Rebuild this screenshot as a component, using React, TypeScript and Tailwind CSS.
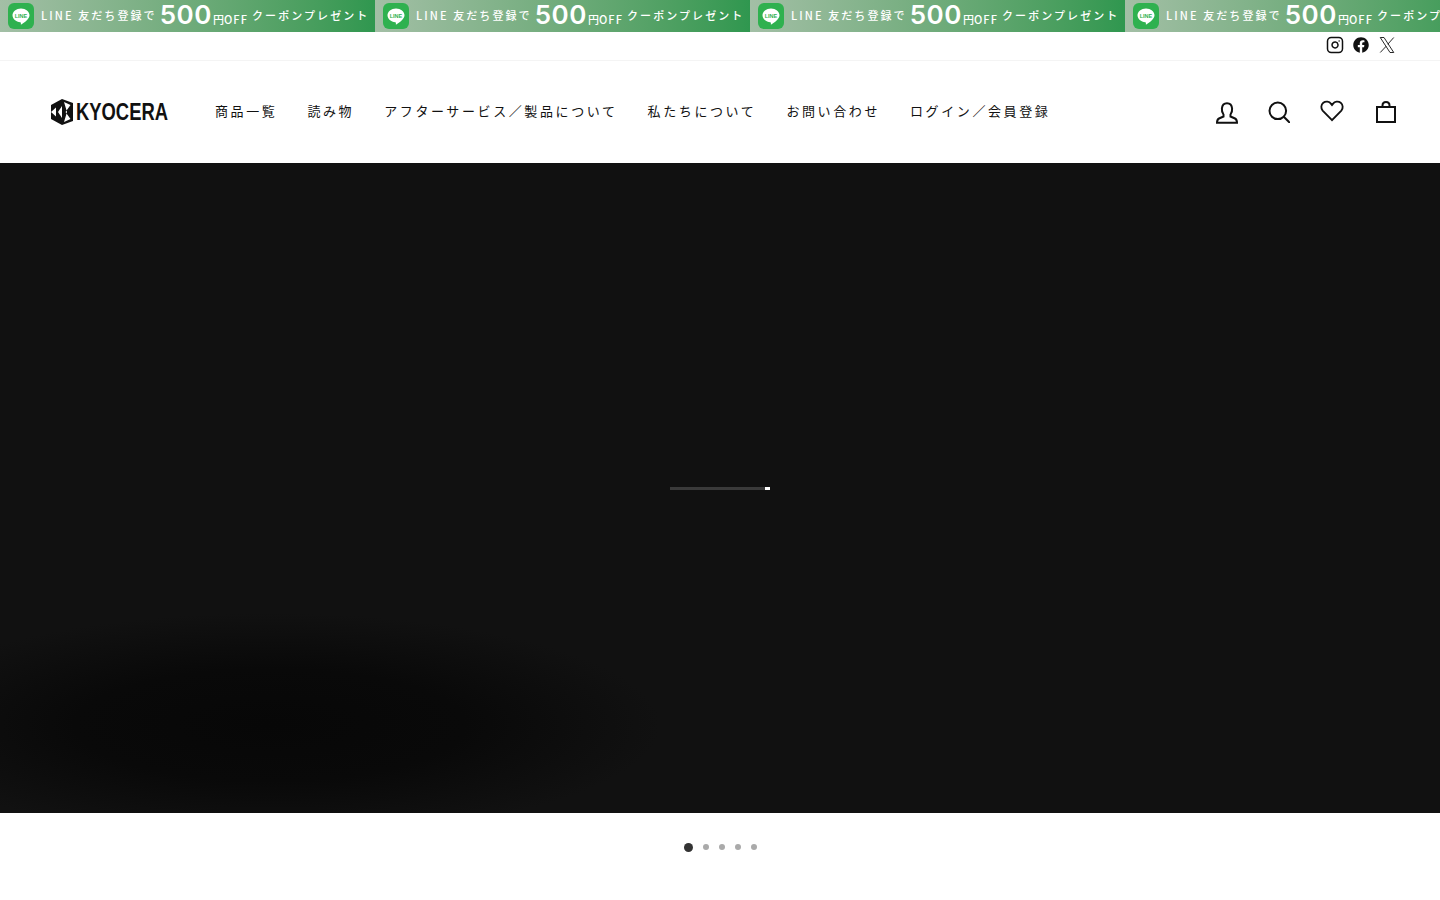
import React from "react";
import { Instagram } from "lucide-react";
import { FaFacebook } from "react-icons/fa";

const jp = "font-['Noto_Sans_CJK_JP','Noto_Sans',sans-serif]";

function LineBadge() {
    return (
        <span className="flex h-[26px] w-[26px] shrink-0 items-center justify-center rounded-[6px] bg-[#2fb14f]">
            <svg width="20" height="19" viewBox="0 0 20 19">
                <path d="M10 1.500c4.700 0 8.500 3 8.500 6.800 0 3.400-4.300 7-8.200 9.200-.6.300-.5-.6-.4-1.100.1-.6 0-1-.6-1.200C5 14.800 1.500 12 1.500 8.300 1.500 4.500 5.300 1.500 10 1.500z" fill="#fff" />
                <text x="10" y="10.500" textAnchor="middle" fontSize="5.500" fontWeight="700" fill="#2fb14f" fontFamily="Liberation Sans, sans-serif">
                    LINE
                </text>
            </svg>
        </span>
    );
}

function Promo() {
    return (
        <div className="flex h-8 w-[375px] shrink-0 items-center overflow-hidden whitespace-nowrap bg-gradient-to-r from-[#a3bfa6] to-[#2f974f] pl-2 leading-[30px] text-white">
            <LineBadge />
            <span className="mb-[2px] ml-[7px] text-[11px] font-medium tracking-[0.19em]">LINE 友だち登録で</span>
            <span className="mb-[2px] ml-[3px] font-['Inter',sans-serif] text-[26px] leading-[30px] font-semibold tracking-[0.02em]">500</span>
            <span className="mt-[5px] ml-[1px] text-[11px] font-medium">円</span>
            <span className="mt-[5px] text-[11px] font-medium tracking-[0.1em]">OFF</span>
            <span className="mb-[2px] ml-[4px] text-[11px] font-medium tracking-[0.19em]">クーポンプレゼント</span>
        </div>
    );
}

function Logo() {
    return (
        <div className="flex items-center">
            <svg width="22" height="26" viewBox="0 0 22 26" className="shrink-0">
                <path d="M11 0 L22 4 V22 L11 26 L0 20 V6 Z" fill="#111" />
                <path d="M0 13 L5 8.500 V17.500 Z" fill="#fff" />
                <path d="M7 13 L11 7 L11 19 Z" fill="#fff" />
                <path d="M13 3 L19.500 6 L14.500 13 L19.500 20 L13 23 L16 13 Z" fill="#fff" />
            </svg>
            <span className="ml-[3px] inline-block w-[91px] origin-left scale-x-[0.8] font-['Liberation_Sans',sans-serif] text-[23px] leading-none font-bold text-[#111]">
                KYOCERA
            </span>
        </div>
    );
}

const navItems = ["商品一覧", "読み物", "アフターサービス／製品について", "私たちについて", "お問い合わせ", "ログイン／会員登録"];

export default function App() {
    return (
        <div className={`min-h-[900px] overflow-hidden bg-white text-[#111] antialiased ${jp}`}>
            <div className="flex w-[1440px] overflow-hidden">
                <Promo />
                <Promo />
                <Promo />
                <Promo />
            </div>

            <div className="flex h-[29px] items-center justify-end gap-[8px] border-b border-[#f4f4f4] pr-[44px] pb-[2px]">
                <Instagram size={18} strokeWidth={2} />
                <FaFacebook size={16} color="#111" className="mx-[1px]" />
                <svg width="18" height="18" viewBox="0 0 24 24" fill="none" stroke="#111" strokeWidth="1.200">
                    <path d="M3 2h5l13 20h-5z" />
                    <path d="M21 2l-8 9M11 13.500 3 22" />
                </svg>
            </div>

            <header className="flex h-[102px] items-center pr-[44px] pl-[51px]">
                <div className="w-[164px]">
                    <Logo />
                </div>
                <nav className="mb-[2px] flex gap-[30px] text-[13px] font-normal tracking-[0.2em]">
                    {navItems.map((item) => (
                        <a key={item} className="whitespace-nowrap text-[#111]">
                            {item}
                        </a>
                    ))}
                </nav>
                <div className="ml-auto flex items-center gap-[30px]">
                    <svg width="22" height="22" viewBox="0 0 22 22" fill="none" stroke="#111" strokeWidth="2" className="mt-[2px]">
                        <path d="M7.500 12.500C6.300 11 5.700 8.800 5.900 6.500 6.200 3 8.200 1.200 11 1.200S15.800 3 16.100 6.500c.2 2.300-.4 4.500-1.600 6v2l4.500 2c1.400.7 2 2 2 4.300H1c0-2.300.6-3.600 2-4.300l4.500-2z" />
                    </svg>
                    <svg width="22" height="22" viewBox="0 0 22 22" fill="none" stroke="#111" strokeWidth="2">
                        <circle cx="9.800" cy="9.800" r="8.300" />
                        <path d="M15.800 15.800 22 22" />
                    </svg>
                    <svg width="24" height="22" viewBox="0 0 26 24" fill="none" stroke="#111" strokeWidth="2" className="mb-[2px]">
                        <path d="M13 22 2.800 11.500C.6 9 1 5 3.500 3c2.700-2 6.500-1.500 8.500 1.200l1 1.300 1-1.300C16 1.500 19.800 1 22.500 3c2.500 2 2.900 6 .7 8.500z" />
                    </svg>
                    <svg width="20" height="22" viewBox="0 0 20 22" fill="none" stroke="#111" strokeWidth="2" className="ml-[2px]">
                        <path d="M1 6h18v15H1zM6.500 6V4.500C6.500 2.500 8 1 10 1s3.500 1.500 3.500 3.500V6" />
                    </svg>
                </div>
            </header>

            <section className="relative flex h-[650px] items-center justify-center overflow-hidden bg-[#111111]">
                <div className="absolute top-[450px] left-0 h-[200px] w-[700px] bg-[radial-gradient(ellipse_390px_112px_at_270px_112px,#070707_0%,#090909_50%,#0d0d0d_75%,#111111_100%)]" />
                <div className="relative flex h-[3px] w-[100px] items-center bg-[#3a3a3a]">
                    <div className="ml-auto h-[3px] w-[5px] bg-white" />
                </div>
            </section>

            <div className="flex h-[68px] items-center justify-center gap-[10px]">
                <span className="h-[9px] w-[9px] rounded-full bg-[#333]" />
                <span className="h-[6px] w-[6px] rounded-full bg-[#aaa]" />
                <span className="h-[6px] w-[6px] rounded-full bg-[#aaa]" />
                <span className="h-[6px] w-[6px] rounded-full bg-[#aaa]" />
                <span className="h-[6px] w-[6px] rounded-full bg-[#aaa]" />
            </div>
        </div>
    );
}
